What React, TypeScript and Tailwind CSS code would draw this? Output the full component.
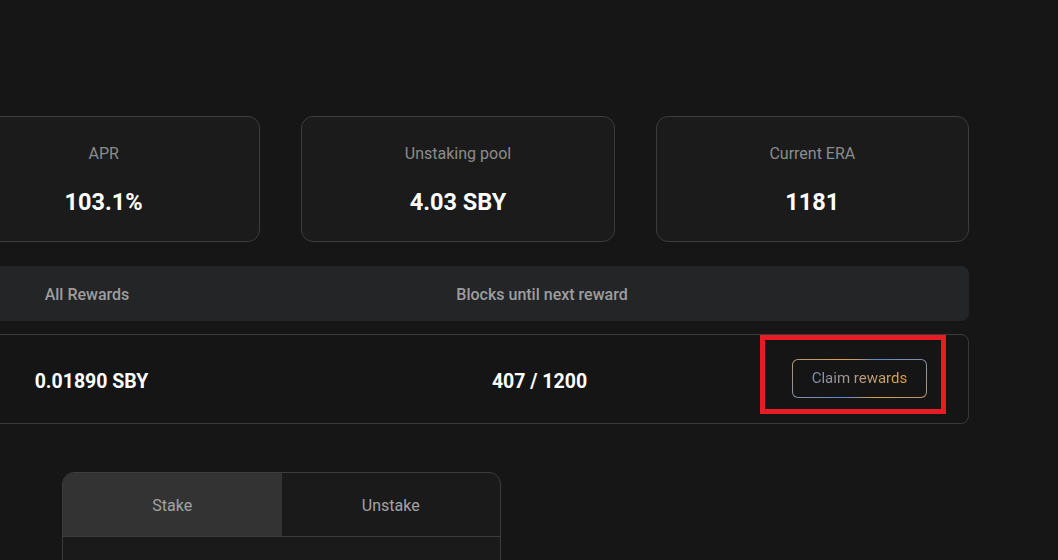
import React from "react";

const stats = [
  { label: "APR", value: "103.1%" },
  { label: "Unstaking pool", value: "4.03 SBY" },
  { label: "Current ERA", value: "1181" },
];

function StatCard({ label, value }: { label: string; value: string }) {
  return (
    <div className="h-[126px] rounded-xl border border-[#3c3c3c] bg-[#1b1b1b] flex flex-col items-center pt-[27px]">
      <span className="text-base text-[#8c8c8c] leading-5">{label}</span>
      <span className="mt-[22px] text-[23.5px] font-bold text-white leading-8">{value}</span>
    </div>
  );
}

export default function App() {
  return (
    <div
      className="h-[560px] w-full overflow-hidden bg-[#161616]"
      style={{ fontFamily: "Roboto, 'Liberation Sans', sans-serif" }}
    >
      <div className="ml-[-53px] w-[1022px] pt-[116px]">
        <div className="grid grid-cols-3 gap-[41px]">
          {stats.map((s) => (
            <StatCard key={s.label} label={s.label} value={s.value} />
          ))}
        </div>

        <div className="mt-[24px] h-[55px] pt-[2px] rounded-lg bg-[#242527] flex items-center text-base font-medium text-[#9e9e9e]">
          <div className="w-[280px] text-center">All Rewards</div>
          <div className="w-[630px] text-center">Blocks until next reward</div>
        </div>

        <div className="relative mt-[13px] h-[90px] rounded-lg border border-[#3a3a3a] bg-[#151515] flex items-center text-[19.5px] font-bold text-white">
          <div className="w-[287px] pt-[5px] text-center">0.01890 SBY</div>
          <div className="ml-[40px] w-[529px] pt-[5px] text-center">407 / 1200</div>
          <div className="ml-[-12px] mt-[-1px] rounded-md p-px bg-[conic-gradient(#b39a72,#5a84d8_45deg,#e3a23c_135deg,#5a84d8_225deg,#e3a23c_315deg,#b39a72)]">
            <button className="h-[37px] w-[133px] rounded-[5px] bg-[#151515] text-[15px] font-normal">
              <span className="bg-gradient-to-r from-[#7f8fb3] to-[#e6a43e] bg-clip-text text-transparent">
                Claim rewards
              </span>
            </button>
          </div>
          <div className="absolute left-[812px] top-0 h-[79px] w-[186px] border-[5px] border-[#e81c24]" />
        </div>

        <div className="ml-[115px] mt-[48px] w-[439px] h-[120px] rounded-t-xl border border-[#3c3c3c] bg-[#1a1a1a] overflow-hidden">
          <div className="flex h-[64px] border-b border-[#3c3c3c] text-base text-[#a3a3a3]">
            <div className="flex-1 pt-[2px] bg-[#333333] flex items-center justify-center">Stake</div>
            <div className="flex-1 pt-[2px] flex items-center justify-center">Unstake</div>
          </div>
        </div>
      </div>
    </div>
  );
}
